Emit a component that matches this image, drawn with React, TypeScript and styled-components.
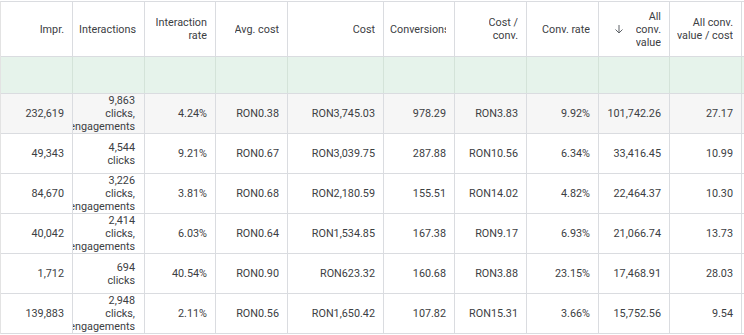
import styled, { createGlobalStyle } from "styled-components";

const GlobalStyle = createGlobalStyle`
  html, body {
    margin: 0;
    padding: 0;
    background: #ffffff;
  }
  body {
    font-family: Roboto, "Liberation Sans", Arial, sans-serif;
    color: #3c4043;
  }
`;

const COLUMNS = "72px 72px 71px 72px 96px 71px 72px 72px 71px 72px 1fr";

const Wrapper = styled.div`
  width: 744px;
  height: 335px;
  overflow: hidden;
  padding-top: 1px;
  box-sizing: border-box;
`;

const Table = styled.div`
  border-top: 1px solid #dadce0;
  border-left: 1px solid #e3e3e3;
  font-size: 10.8px;
  line-height: 13px;
`;

const Row = styled.div<{ $height: number; $bg?: string }>`
  display: grid;
  grid-template-columns: ${COLUMNS};
  height: ${(p) => p.$height}px;
  background: ${(p) => p.$bg || "#ffffff"};
  border-bottom: 1px solid #dadce0;
  box-sizing: border-box;
`;

const HeaderCell = styled.div`
  display: flex;
  align-items: center;
  justify-content: flex-end;
  gap: 11px;
  padding: 0 8px 0 6px;
  border-right: 1px solid #dadce0;
  min-width: 0;
  color: #3c4043;
`;

const HeaderLabel = styled.div`
  overflow: hidden;
  text-align: right;
  min-width: 0;
`;

const SortIcon = styled.svg`
  flex: none;
  width: 12px;
  height: 12px;
  color: #5f6368;
`;

const EmptyCell = styled.div`
  border-right: 1px solid #d4e3d9;
`;

const Cell = styled.div`
  display: flex;
  align-items: center;
  justify-content: flex-end;
  padding: 0 8px;
  border-right: 1px solid #dadce0;
  white-space: nowrap;
  min-width: 0;
`;

const StackCell = styled(Cell)`
  flex-direction: column;
  justify-content: center;
  align-items: flex-end;
  overflow: hidden;
  padding: 0 9px 0 8px;
`;

const StackText = styled.div`
  text-align: right;
`;

const headers = [
  "Impr.",
  "Interactions",
  "Interaction rate",
  "Avg. cost",
  "Cost",
  "Conversions",
  "Cost / conv.",
  "Conv. rate",
  "All conv. value",
  "All conv. value / cost",
];

const headerLines: Record<string, string[]> = {
  "Interaction rate": ["Interaction", "rate"],
  "Cost / conv.": ["Cost /", "conv."],
  "All conv. value": ["All", "conv.", "value"],
  "All conv. value / cost": ["All conv.", "value / cost"],
};

type DataRow = {
  impr: string;
  interactions: string[];
  values: string[];
};

const rows: DataRow[] = [
  {
    impr: "232,619",
    interactions: ["9,863", "clicks,", "engagements"],
    values: ["4.24%", "RON0.38", "RON3,745.03", "978.29", "RON3.83", "9.92%", "101,742.26", "27.17"],
  },
  {
    impr: "49,343",
    interactions: ["4,544", "clicks"],
    values: ["9.21%", "RON0.67", "RON3,039.75", "287.88", "RON10.56", "6.34%", "33,416.45", "10.99"],
  },
  {
    impr: "84,670",
    interactions: ["3,226", "clicks,", "engagements"],
    values: ["3.81%", "RON0.68", "RON2,180.59", "155.51", "RON14.02", "4.82%", "22,464.37", "10.30"],
  },
  {
    impr: "40,042",
    interactions: ["2,414", "clicks,", "engagements"],
    values: ["6.03%", "RON0.64", "RON1,534.85", "167.38", "RON9.17", "6.93%", "21,066.74", "13.73"],
  },
  {
    impr: "1,712",
    interactions: ["694", "clicks"],
    values: ["40.54%", "RON0.90", "RON623.32", "160.68", "RON3.88", "23.15%", "17,468.91", "28.03"],
  },
  {
    impr: "139,883",
    interactions: ["2,948", "clicks,", "engagements"],
    values: ["2.11%", "RON0.56", "RON1,650.42", "107.82", "RON15.31", "3.66%", "15,752.56", "9.54"],
  },
];

function ArrowDown() {
  return (
    <SortIcon viewBox="0 0 24 24" fill="none" stroke="currentColor" strokeWidth="2">
      <path d="M12 4v16M5 13l7 7 7-7" />
    </SortIcon>
  );
}

export default function App() {
  return (
    <Wrapper>
      <GlobalStyle />
      <Table>
        <Row $height={55}>
          {headers.map((h) => (
            <HeaderCell key={h}>
              {h === "All conv. value" && <ArrowDown />}
              <HeaderLabel>
                {(headerLines[h] || [h]).map((line) => (
                  <div key={line}>{line}</div>
                ))}
              </HeaderLabel>
            </HeaderCell>
          ))}
          <div />
        </Row>
        <Row $height={37} $bg="#e6f3eb">
          {headers.map((h) => (
            <EmptyCell key={h} />
          ))}
          <div />
        </Row>
        {rows.map((r, i) => (
          <Row key={r.impr} $height={40} $bg={i === 0 ? "#f6f6f6" : undefined}>
            <Cell>{r.impr}</Cell>
            <StackCell>
              <StackText>
                {r.interactions.map((line) => (
                  <div key={line}>{line}</div>
                ))}
              </StackText>
            </StackCell>
            {r.values.map((v, j) => (
              <Cell key={j}>{v}</Cell>
            ))}
            <div />
          </Row>
        ))}
      </Table>
    </Wrapper>
  );
}
